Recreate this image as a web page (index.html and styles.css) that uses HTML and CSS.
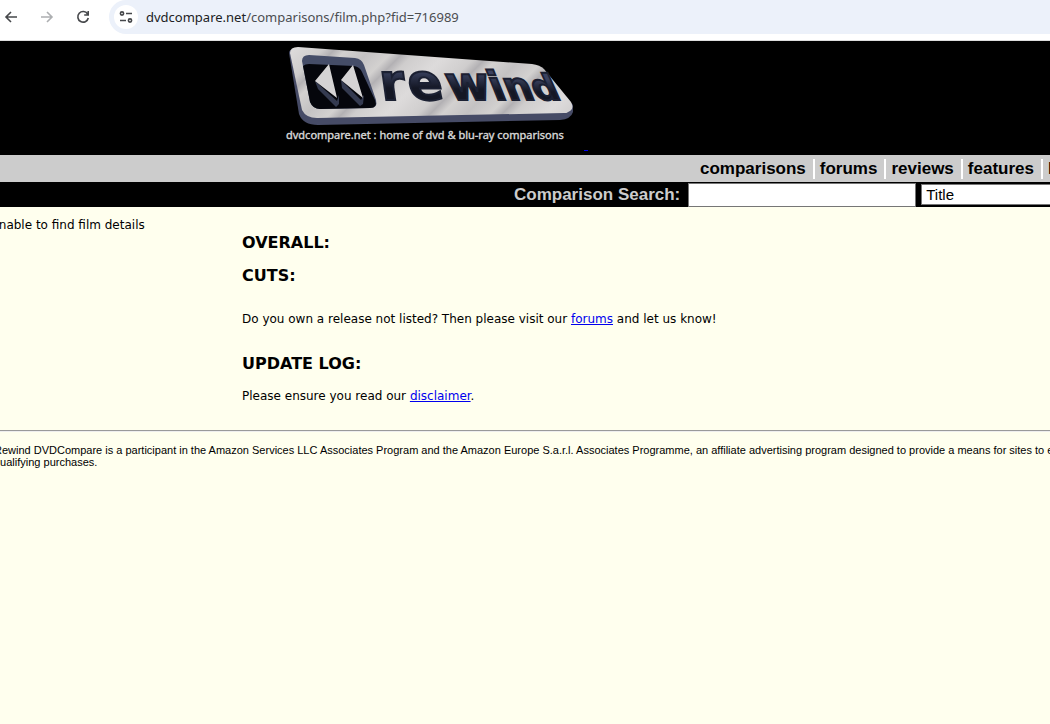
FILE: index.html
```html
<!DOCTYPE html>
<html lang="en">
<head>
  <meta charset="UTF-8">
  <title>Rewind @ dvdcompare.net</title>
  <link rel="stylesheet" href="styles.css">
</head>
<body>
  <!-- browser toolbar -->
  <div class="toolbar">
    <button type="button" class="tool" aria-label="Back">
      <svg width="16" height="16" viewBox="0 0 16 16"><path d="M14 8H3M8 3L3 8l5 5"/></svg>
    </button>
    <button type="button" class="tool disabled" aria-label="Forward">
      <svg width="16" height="16" viewBox="0 0 16 16"><path d="M2 8h11M8 3l5 5-5 5"/></svg>
    </button>
    <button type="button" class="tool" aria-label="Reload">
      <svg width="16" height="16" viewBox="0 0 16 16"><path d="M12.6 5A5.3 5.3 0 1 0 13.3 9M13.2 2v4H9.2"/></svg>
    </button>
    <div class="address">
      <button type="button" class="site-info" aria-label="Site information">
        <svg width="16" height="16" viewBox="0 0 16 16"><circle cx="4" cy="4.5" r="1.6"/><path d="M8 4.5h6M2 11.5h6"/><circle cx="12" cy="11.5" r="1.6"/></svg>
      </button>
      <span class="url"><span class="host">dvdcompare.net</span>/comparisons/film.php?fid=716989</span>
    </div>
  </div>

  <div class="page">
    <div class="banner">
      <a href="#" class="logo" aria-label="rewind">
        <svg width="300" height="107" viewBox="282 43 300 107">
          <defs>
            <linearGradient id="metal" gradientUnits="userSpaceOnUse" x1="290" y1="50" x2="330" y2="90" spreadMethod="reflect">
              <stop offset="0" stop-color="#dddbdb"/>
              <stop offset="0.4" stop-color="#cfcdcd"/>
              <stop offset="0.55" stop-color="#b3b1b4"/>
              <stop offset="0.7" stop-color="#d3d1d0"/>
              <stop offset="1" stop-color="#c4c2c3"/>
            </linearGradient>
            <linearGradient id="letters" x1="0" y1="0" x2="0" y2="1">
              <stop offset="0.3" stop-color="#3a4260"/>
              <stop offset="0.6" stop-color="#141724"/>
            </linearGradient>
          </defs>
          <path fill="#464b66" d="M289 53Q289 49 295 49L540 68 573 105V112Q571 119 560 120L318 125Q303 125 299 114Z"/>
          <path fill="url(#metal)" d="M290 53Q290 47 298 47L532 64Q540 65 544 69L571 102Q576 111 564 113L317 118Q306 118 302 110Z"/>
          <path fill="#454d68" d="M302 61Q302 55 309 55L355 58Q362 59 364 65L376 100Q378 108 370 108L320 109Q313 109 310 102Z"/>
          <path fill="#05060c" d="M303 66Q305 64 309 64L354 66Q360 67 362 72L375 100Q378 108 370 108L320 109Q313 109 310 102Z"/>
          <path fill="#343a50" d="M315 81l22 20 2-6v9l-3 3-18-18zM341 80l20 20 3-5-1 9-3 2-18-18z"/>
          <path fill="#d5d3d4" d="M329 64l8 34-22-17zM353 65l10 33-22-18z"/>
          <g class="wordmark" fill="url(#letters)" stroke="#1b2032">
            <text transform="translate(382 100) skewX(8)" font-size="51">r</text>
            <text transform="translate(411 100) skewX(12)" font-size="51">e</text>
            <text transform="translate(450 100) skewX(14)" font-size="47">w</text>
            <text transform="translate(495 100) skewX(22)" font-size="40">i</text>
            <text transform="translate(509 100) skewX(22)" font-size="39">n</text>
            <text transform="translate(537 100) skewX(24)" font-size="36">d</text>
          </g>
          <text class="tagline" x="286" y="139">dvdcompare.net : home of dvd &amp; blu-ray comparisons</text>
        </svg>
      </a>
      <span class="link-mark"></span>
    </div>

    <nav class="menu">
      <a href="#">comparisons</a>
      <a href="#">forums</a>
      <a href="#">reviews</a>
      <a href="#">features</a>
      <a href="#">links</a>
    </nav>

    <form class="search">
      <label for="searchText">Comparison Search:</label>
      <input type="text" id="searchText" name="param">
      <select name="searchtype" aria-label="Search type">
        <option>Title</option>
      </select>
    </form>

    <div class="content">
      <div class="message">Unable to find film details</div>
      <div class="details">
        <h3>OVERALL:</h3>
        <h3>CUTS:</h3>
        <p class="release">Do you own a release not listed? Then please visit our <a href="#">forums</a> and let us know!</p>
        <h3>UPDATE LOG:</h3>
        <p>Please ensure you read our <a href="#">disclaimer</a>.</p>
      </div>
    </div>

    <hr>
    <p class="affiliate">Rewind DVDCompare is a participant in the Amazon Services LLC Associates Program and the Amazon Europe S.a.r.l. Associates Programme, an affiliate advertising program designed to provide a means for sites to earn advertising fees. We earn from<br>qualifying purchases.</p>
  </div>
</body>
</html>
```

FILE: styles.css
```css
body {
  margin: 0;
  background: #ffffee;
  color: #000;
  font-family: "DejaVu Sans", Verdana, sans-serif;
  font-size: 12px;
  overflow-x: hidden;
}
a {
  color: #0000ee;
}

/* toolbar */
.toolbar {
  display: flex;
  height: 40px;
  align-items: flex-start;
  background: #fff;
  border-bottom: 1px solid #ddd;
}
.tool,
.site-info {
  display: flex;
  align-items: center;
  justify-content: center;
  padding: 0;
  border: 0;
  background: none;
}
.tool {
  width: 36px;
  height: 34px;
}
.tool:first-child {
  margin-left: -7px;
}
.toolbar svg {
  fill: none;
  stroke: #46484b;
  stroke-width: 1.6;
}
.toolbar .disabled svg {
  stroke: #adafb1;
}
.address {
  display: flex;
  flex: 1;
  align-items: center;
  gap: 8px;
  height: 34px;
  margin-left: 8px;
  padding-left: 5px;
  background: #ecf1fa;
  border-radius: 17px 0 0 17px;
}
.site-info {
  width: 24px;
  height: 24px;
  border-radius: 50%;
  background: #fff;
}
.url {
  color: #4b4d50;
  font-family: "Noto Sans", sans-serif;
  font-size: 13px;
}
.host {
  color: #202124;
}

/* page runs past both sides of the window */
.page {
  margin-left: -10px;
  margin-right: -280px;
}
.banner {
  display: flex;
  align-items: flex-end;
  height: 114px;
  padding-left: 292px;
  background: #000;
}
.logo {
  align-self: flex-start;
  padding-top: 2px;
}
.logo svg {
  display: block;
}
.wordmark {
  font-family: "DejaVu Sans", sans-serif;
  font-weight: bold;
  stroke-width: 2;
}
.tagline {
  fill: #d6d6d6;
  stroke: #d6d6d6;
  stroke-width: 0.4;
  font-family: "Noto Sans", sans-serif;
  font-size: 11px;
}
.link-mark {
  width: 4px;
  height: 1px;
  margin: 0 0 4px 2px;
  background: #0000ee;
}

.menu {
  display: flex;
  align-items: center;
  height: 27px;
  padding-left: 705px;
  background: #ccc;
  font-family: "Liberation Sans", Arial, sans-serif;
  font-size: 17px;
  font-weight: bold;
}
.menu a {
  padding: 0 7px 0 5px;
  border-right: 2px solid #fff;
  color: #000;
  line-height: 20px;
  text-decoration: none;
}
.search {
  display: flex;
  align-items: center;
  gap: 5px;
  height: 25px;
  padding-left: 524px;
  background: #000;
  font-family: "Liberation Sans", Arial, sans-serif;
}
.search label {
  margin-right: 3px;
  color: #ccc;
  font-size: 17px;
  font-weight: bold;
  line-height: 20px;
}
.search input,
.search select {
  box-sizing: border-box;
  border: 1px solid #767676;
  background: #fff;
  font-family: inherit;
  font-size: 15px;
}
.search input {
  width: 228px;
  height: 24px;
}
.search select {
  width: 180px;
  height: 21px;
  padding: 0;
}

.content {
  display: flex;
  padding-top: 9px;
}
.message {
  width: 252px;
  line-height: 18px;
}
.details {
  padding-top: 17px;
}
.details h3 {
  margin: 0 0 13px;
  font-size: 16px;
  line-height: 20px;
}
.details p {
  margin: 0;
  line-height: 18px;
}
.details .release {
  margin: 24px 0 26px;
}
hr {
  margin: 25px 0 0;
}
.affiliate {
  margin: 12px 0 0;
  padding-left: 4px;
  font-family: "Liberation Sans", Arial, sans-serif;
  font-size: 11px;
  line-height: 12px;
  white-space: nowrap;
}
```
